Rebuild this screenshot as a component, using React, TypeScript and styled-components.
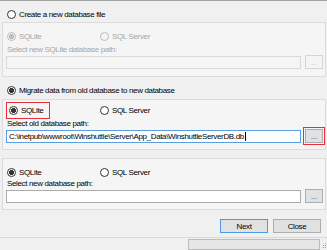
import React from 'react';
import styled, { createGlobalStyle, css } from 'styled-components';

const Global = createGlobalStyle`
  html, body { margin: 0; padding: 0; background: #f0f0f0; }
  body { width: 327px; height: 250px; overflow: hidden; }
  *, *::before, *::after { box-sizing: border-box; }
`;

const Window = styled.div`
  width: 327px;
  height: 250px;
  display: flex;
  flex-direction: column;
  background: #f0f0f0;
  border-top: 1px solid #a3a3a3;
  font-family: "Liberation Sans", Arial, sans-serif;
  font-size: 8px;
  letter-spacing: -0.35px;
  color: #000;
`;

const Body = styled.div`
  display: flex;
  flex-direction: column;
  padding: 0 1px 0 2px;
`;

const HeaderRow = styled.div<{ $top: number }>`
  display: flex;
  align-items: center;
  height: 12px;
  margin-top: ${(p) => p.$top}px;
  padding-left: 5px;
`;

const Panel = styled.div<{ $h: number; $top: number; $pt: number }>`
  display: flex;
  flex-direction: column;
  height: ${(p) => p.$h}px;
  margin-top: ${(p) => p.$top}px;
  padding: ${(p) => p.$pt}px 2px 0 3px;
  border: 1px solid #dcdcdc;
  background: #f5f5f5;
`;

const RadioRow = styled.div<{ $h: number }>`
  display: grid;
  grid-template-columns: 94px auto;
  align-items: center;
  height: ${(p) => p.$h}px;
`;

const RadioLabel = styled.label<{ $disabled?: boolean; $indent?: number }>`
  display: flex;
  align-items: center;
  height: 12px;
  margin-left: ${(p) => p.$indent ?? 1}px;
  white-space: nowrap;
  color: ${(p) => (p.$disabled ? '#a6a6a6' : '#000')};
`;

const Circle = styled.span<{ $checked?: boolean; $disabled?: boolean }>`
  display: inline-block;
  flex: none;
  width: 9px;
  height: 9px;
  margin-right: 3px;
  border-radius: 50%;
  border: 1px solid ${(p) => (p.$disabled ? '#bcbcbc' : '#333')};
  background: ${(p) =>
    p.$checked
      ? `radial-gradient(circle, ${p.$disabled ? '#bcbcbc' : '#333'} 0 2.3px, ${p.$disabled ? '#f4f4f4' : '#fff'} 2.8px)`
      : p.$disabled
      ? '#f4f4f4'
      : '#fff'};
`;

const Highlight = styled.div`
  display: flex;
  align-items: center;
  width: 44px;
  height: 17px;
  padding-left: 2px;
  border: 1px solid #e8303a;
`;

const FieldLabel = styled.div<{ $disabled?: boolean; $h: number; $top?: number }>`
  height: ${(p) => p.$h}px;
  line-height: ${(p) => p.$h}px;
  margin-top: ${(p) => p.$top ?? 0}px;
  padding-left: 1px;
  white-space: nowrap;
  color: ${(p) => (p.$disabled ? '#a6a6a6' : '#000')};
`;

const InputRow = styled.div`
  display: flex;
  align-items: center;
  gap: 4px;
  height: 14px;
`;

const Field = styled.div<{ $state: 'disabled' | 'focused' | 'normal' }>`
  flex: 1;
  height: 13px;
  display: flex;
  align-items: center;
  padding-left: 2px;
  white-space: nowrap;
  overflow: hidden;
  ${(p) =>
    p.$state === 'disabled'
      ? css`
          background: #f5f5f5;
          border: 1px solid #d9d9d9;
        `
      : p.$state === 'focused'
      ? css`
          background: #fff;
          border: 1px solid #5a9fe0;
        `
      : css`
          background: #fff;
          border: 1px solid #acacac;
        `}
`;

const Caret = styled.span`
  display: inline-block;
  width: 1px;
  height: 9px;
  margin-left: 1px;
  background: #000;
`;

const BrowseButton = styled.div<{ $disabled?: boolean; $marked?: boolean }>`
  flex: none;
  width: 18px;
  height: 14px;
  display: flex;
  align-items: flex-end;
  justify-content: center;
  padding-bottom: 2px;
  font-size: 7px;
  letter-spacing: 0;
  line-height: 6px;
  color: ${(p) => (p.$disabled ? '#b5b5b5' : '#333')};
  background: ${(p) => (p.$disabled ? '#f4f4f4' : '#e1e1e1')};
  border: 1px solid ${(p) => (p.$disabled ? '#d4d4d4' : '#adadad')};
  ${(p) =>
    p.$marked &&
    css`
      outline: 1px solid #e8303a;
      outline-offset: 1px;
    `}
`;

const Footer = styled.div`
  display: flex;
  justify-content: flex-end;
  gap: 5px;
  margin-top: 9px;
  padding-right: 6px;
`;

const DialogButton = styled.div<{ $default?: boolean }>`
  width: 48px;
  height: 14px;
  display: flex;
  align-items: center;
  justify-content: center;
  background: #e1e1e1;
  border: 1px solid ${(p) => (p.$default ? '#4d9be6' : '#adadad')};
`;

const StatusBar = styled.div`
  margin-top: auto;
  height: 13px;
  display: flex;
  align-items: flex-start;
  justify-content: flex-end;
  padding-top: 1px;
  border-top: 1px solid #d9d9d9;
`;

const Progress = styled.div`
  width: 132px;
  height: 11px;
  background: #e6e6e6;
  border: 1px solid #bcbcbc;
`;

const Grip = styled.svg`
  width: 5px;
  height: 11px;
  margin-left: 2px;
  flex: none;
`;

type RadioProps = { text: string; checked?: boolean; disabled?: boolean; indent?: number };

const Radio = ({ text, checked, disabled, indent }: RadioProps) => (
  <RadioLabel $disabled={disabled} $indent={indent}>
    <Circle $checked={checked} $disabled={disabled} />
    <span>{text}</span>
  </RadioLabel>
);

export default function App() {
  return (
    <>
      <Global />
      <Window>
        <Body>
          <HeaderRow $top={7}>
            <Radio text="Create  a new database file" indent={0} />
          </HeaderRow>
          <Panel $h={55} $top={2} $pt={7}>
            <RadioRow $h={12}>
              <Radio text="SQLite" checked disabled />
              <Radio text="SQL Server" disabled indent={0} />
            </RadioRow>
            <FieldLabel $disabled $h={10} $top={3}>
              Select new SQLite database path:
            </FieldLabel>
            <InputRow>
              <Field $state="disabled" />
              <BrowseButton $disabled>...</BrowseButton>
            </InputRow>
          </Panel>

          <HeaderRow $top={7}>
            <Radio text="Migrate data from old database to new database" checked indent={0} />
          </HeaderRow>
          <Panel $h={51} $top={3} $pt={2}>
            <RadioRow $h={17}>
              <Highlight>
                <Radio text="SQLite" checked indent={0} />
              </Highlight>
              <Radio text="SQL Server" indent={0} />
            </RadioRow>
            <FieldLabel $h={10}>Select old database path:</FieldLabel>
            <InputRow>
              <Field $state="focused">
                C:\inetpub\wwwroot\Winshuttle\Server\App_Data\WinshuttleServerDB.db
                <Caret />
              </Field>
              <BrowseButton $marked>...</BrowseButton>
            </InputRow>
          </Panel>

          <Panel $h={52} $top={8} $pt={7}>
            <RadioRow $h={12}>
              <Radio text="SQLite" checked />
              <Radio text="SQL Server" indent={0} />
            </RadioRow>
            <FieldLabel $h={11}>Select new database path:</FieldLabel>
            <InputRow>
              <Field $state="normal" />
              <BrowseButton>...</BrowseButton>
            </InputRow>
          </Panel>
        </Body>

        <Footer>
          <DialogButton $default>Next</DialogButton>
          <DialogButton>Close</DialogButton>
        </Footer>

        <StatusBar>
          <Progress />
          <Grip viewBox="0 0 5 11">
            <rect x="3" y="4" width="1" height="1" fill="#a0a0a0" />
            <rect x="3" y="6" width="1" height="1" fill="#a0a0a0" />
            <rect x="1" y="6" width="1" height="1" fill="#a0a0a0" />
            <rect x="3" y="8" width="1" height="1" fill="#a0a0a0" />
            <rect x="1" y="8" width="1" height="1" fill="#a0a0a0" />
          </Grip>
        </StatusBar>
      </Window>
    </>
  );
}
